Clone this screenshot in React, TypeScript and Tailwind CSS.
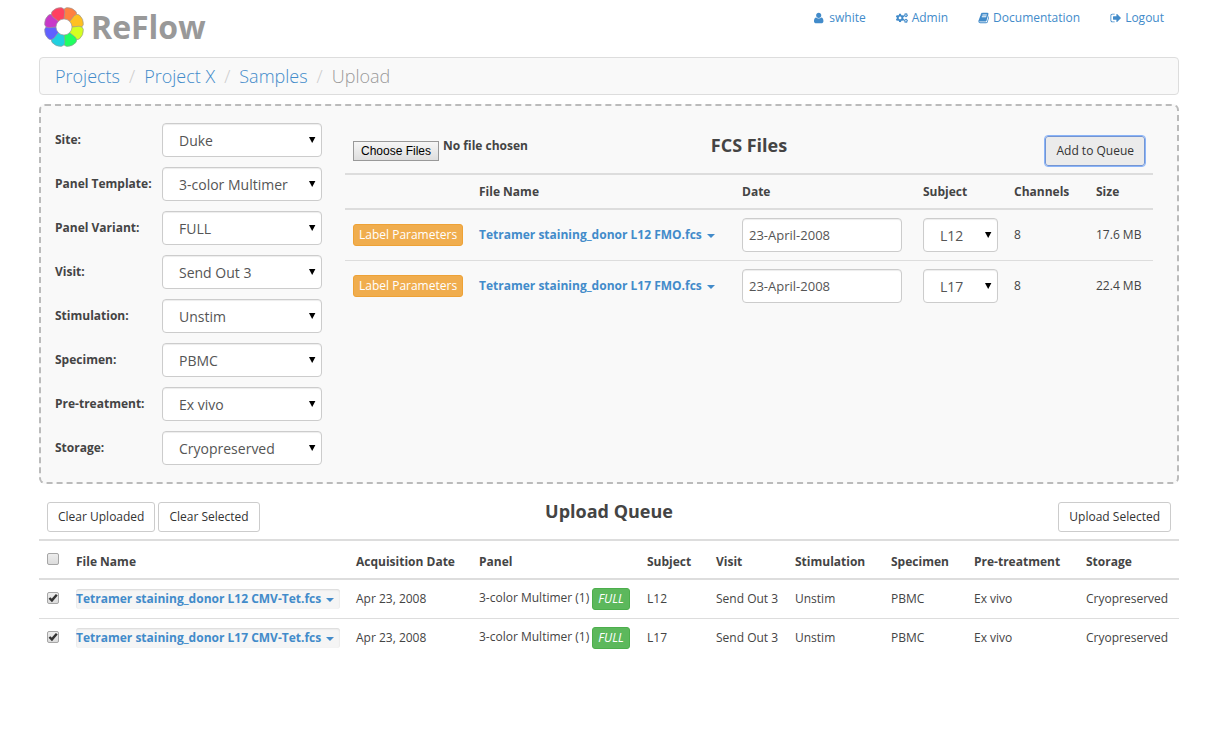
import { useId, type ReactNode } from "react";
import { FaCogs } from "react-icons/fa";

const PETALS = ["#ff8040", "#ffc020", "#d4ff20", "#20ff60", "#20d0e0", "#6060ff", "#c838c8", "#ff4060"];

function Logo() {
  return (
    <svg className="size-[42px]" viewBox="-21 -21 42 42" aria-hidden="true">
      {PETALS.map((color, i) => (
        <path
          key={color}
          transform={`rotate(${22.5 + i * 45})`}
          d="M-3 -7.4 L-6.5 -13.6 Q-7.8 -17 -5.2 -18.8 Q0 -21.4 5.2 -18.8 Q7.8 -17 6.5 -13.6 L3 -7.4 Q0 -8.6 -3 -7.4Z"
          fill={color}
          stroke="#999"
          strokeWidth="0.6"
        />
      ))}
    </svg>
  );
}

function Glyph({ width = 1792, d }: { width?: number; d: string }) {
  return (
    <svg className="h-3 w-auto fill-current" viewBox={`0 0 ${width} 1792`} aria-hidden="true">
      <path d={d} />
    </svg>
  );
}

const USER =
  "M1408 1399q0 109-62.5 187t-150.5 78h-982q-88 0-150.5-78t-62.5-187q0-85 8.5-160.5t31.5-152 58.5-131 94-89 134.5-34.5q131 128 377 128t377-128q76 0 134.5 34.5t94 89 58.5 131 31.5 152 8.5 160.5zm-320-887q0 159-112.5 271.5t-271.5 112.5-271.5-112.5-112.5-271.5 112.5-271.5 271.5-112.5 271.5 112.5 112.5 271.5z";
const BOOK =
  "M1703 478q40 57 18 129l-275 906q-19 64-76.5 107.5t-122.5 43.5h-923q-77 0-148.5-53.5t-99.5-131.5q-24-67-2-127 0-4 3-27t4-37q1-8-3-21.5t-3-19.5q2-11 8-21t16.5-23.5 16.5-23.5q23-38 45-91.5t30-91.5q3-10 .5-30t-.5-28q3-11 17-28t17-23q21-36 42-92t25-90q1-9-2.5-32t.5-28q4-13 22-30.5t22-22.5q19-26 42.5-84.5t27.5-96.5q1-8-3-25.5t-2-26.5q2-8 9-18t18-23 17-21q8-12 16.5-30.5t15-35 16-36 19.5-32 26.5-23.5 36-11.5 47.5 5.5l-1 3q38-9 51-9h761q74 0 114 56t18 130l-274 906q-36 119-71.5 153.5t-128.5 34.5h-869q-27 0-38 15-11 16-1 43 24 70 144 70h923q29 0 56-15.5t35-41.5l300-987q7-22 5-57 38 15 59 43zm-1064 2q-4 13 2 22.5t20 9.5h608q13 0 25.5-9.5t16.5-22.5l21-64q4-13-2-22.5t-20-9.5h-608q-13 0-25.5 9.5t-16.5 22.5zm-83 256q-4 13 2 22.5t20 9.5h608q13 0 25.5-9.5t16.5-22.5l21-64q4-13-2-22.5t-20-9.5h-608q-13 0-25.5 9.5t-16.5 22.5z";
const SIGN_OUT =
  "M704 1440q0 4 1 20t.5 26.5-3 23.5-10 19.5-20.5 6.5h-320q-119 0-203.5-84.5t-84.5-203.5v-704q0-119 84.5-203.5t203.5-84.5h320q13 0 22.5 9.5t9.5 22.5q0 4 1 20t.5 26.5-3 23.5-10 19.5-20.5 6.5h-320q-66 0-113 47t-47 113v704q0 66 47 113t113 47h312l11.5 1 11.5 3 8 5.5 7 9 2 13.5zm928-544q0 26-19 45l-544 544q-19 19-45 19t-45-19-19-45v-288h-448q-26 0-45-19t-19-45v-384q0-26 19-45t45-19h448v-288q0-26 19-45t45-19 45 19l544 544q19 19 19 45z";

const NAV: { label: string; icon: ReactNode }[] = [
  { label: "swhite", icon: <Glyph width={1640} d={USER} /> },
  { label: "Admin", icon: <FaCogs className="h-3 w-3" aria-hidden="true" /> },
  { label: "Documentation", icon: <Glyph width={1640} d={BOOK} /> },
  { label: "Logout", icon: <Glyph width={1640} d={SIGN_OUT} /> },
];

const FILTERS = [
  ["Site:", "Duke"],
  ["Panel Template:", "3-color Multimer"],
  ["Panel Variant:", "FULL"],
  ["Visit:", "Send Out 3"],
  ["Stimulation:", "Unstim"],
  ["Specimen:", "PBMC"],
  ["Pre-treatment:", "Ex vivo"],
  ["Storage:", "Cryopreserved"],
];

const FILES = [
  { name: "Tetramer staining_donor L12 FMO.fcs", date: "23-April-2008", subject: "L12", channels: 8, size: "17.6 MB" },
  { name: "Tetramer staining_donor L17 FMO.fcs", date: "23-April-2008", subject: "L17", channels: 8, size: "22.4 MB" },
];

const QUEUE = [
  { name: "Tetramer staining_donor L12 CMV-Tet.fcs", subject: "L12" },
  { name: "Tetramer staining_donor L17 CMV-Tet.fcs", subject: "L17" },
];

function Select({ id, value, label }: { id?: string; value: string; label?: string }) {
  return (
    <span className="grid w-full items-center">
      <select
        id={id}
        aria-label={label}
        defaultValue={value}
        className="col-start-1 row-start-1 h-[34px] w-full appearance-none rounded border border-[#ccc] bg-white pt-0.5 pl-4 text-sm text-[#555] shadow-[inset_0_1px_1px_rgba(0,0,0,0.075)]"
      >
        <option>{value}</option>
      </select>
      <svg
        className="pointer-events-none col-start-1 row-start-1 mr-1.5 h-1.5 w-[7px] justify-self-end"
        viewBox="0 0 7 6"
        aria-hidden="true"
      >
        <path d="M0 0H6.4L3.2 6Z" fill="#000" />
      </svg>
    </span>
  );
}

function Checkbox({ label, checked = false }: { label: string; checked?: boolean }) {
  return (
    <span className="grid size-3">
      <input
        type="checkbox"
        aria-label={label}
        defaultChecked={checked}
        className="peer col-start-1 row-start-1 size-3 appearance-none rounded-xs border border-[#a6a6a6] bg-linear-to-b from-[#ededed] to-[#dcdcdc]"
      />
      <svg
        className="pointer-events-none invisible col-start-1 row-start-1 size-3 peer-checked:visible"
        viewBox="0 0 12 12"
        aria-hidden="true"
      >
        <path d="M2.4 6L4.9 8.4L9.8 2.8" fill="none" stroke="#333" strokeWidth="2.4" />
      </svg>
    </span>
  );
}

function Caret() {
  return (
    <svg className="ml-[5px] inline-block h-1 w-2 fill-current" viewBox="0 0 8 4" aria-hidden="true">
      <path d="M0 0H8L4 4Z" />
    </svg>
  );
}

function Button({ children, active = false }: { children: ReactNode; active?: boolean }) {
  const state = active
    ? "border-[#7495d3] bg-[#ebebeb] outline-1 outline-[#8ab4f8]"
    : "border-[#ccc] bg-white";
  return (
    <button type="button" className={`h-[30px] rounded-[3px] border px-2.5 text-xs text-[#333] ${state}`}>
      {children}
    </button>
  );
}

function Filter({ label, value }: { label: string; value: string }) {
  const id = useId();
  return (
    <div className="flex items-center">
      <label htmlFor={id} className="w-[107px] shrink-0 pb-0.5 font-bold">
        {label}
      </label>
      <Select id={id} value={value} />
    </div>
  );
}

export default function App() {
  return (
    <div className="mx-auto max-w-[1140px] font-['Open_Sans','Noto_Sans',sans-serif] text-xs leading-[17px] text-[#444]">
      <header className="flex h-[57px] items-start justify-between pr-[15px] pl-1">
        <a href="#home" className="flex items-center gap-1.5 pt-1.5 text-[32px] leading-[42px] font-bold text-[#999]">
          <Logo />
          ReFlow
        </a>
        <nav className="flex gap-[30px] pt-[9px] text-[#428bca]">
          {NAV.map(({ label, icon }) => (
            <a key={label} href={`#${label}`} className="flex items-center gap-1">
              {icon}
              {label}
            </a>
          ))}
        </nav>
      </header>

      <nav
        aria-label="Breadcrumb"
        className="rounded border border-[#ddd] bg-[#f9f9f9] px-[15px] py-1.5 text-lg leading-6 font-light"
      >
        <ol className="flex gap-[9px] text-[#ccc]">
          {["Projects", "Project X", "Samples"].map((name) => (
            <li key={name} className="flex gap-[9px]">
              <a href={`#${name}`} className="text-[#428bca]">
                {name}
              </a>
              <span aria-hidden="true">/</span>
            </li>
          ))}
          <li aria-current="page" className="text-[#999]">
            Upload
          </li>
        </ol>
      </nav>

      <main>
        <section className="mt-[9px] flex rounded-md border-2 border-dashed border-[#bbb] bg-[#f9f9f9] pt-[17px] pr-6 pb-[17px] pl-3.5">
          <form className="flex w-[267px] shrink-0 flex-col gap-2.5">
            {FILTERS.map(([label, value]) => (
              <Filter key={label} label={label} value={value} />
            ))}
          </form>

          <div className="ml-[23px] min-w-0 grow">
            <div className="grid h-[50px] grid-cols-[1fr_auto_1fr] items-start px-2 pt-[13px]">
              <div className="flex items-start gap-1 pt-px font-bold">
                <label className="mt-1 h-5 border border-[#999] bg-linear-to-b from-[#f6f6f6] to-[#dedede] px-[7px] font-['Liberation_Sans',sans-serif] text-xs leading-[18px] font-normal text-black">
                  Choose Files
                  <input type="file" multiple className="sr-only" />
                </label>
                <span>No file chosen</span>
              </div>
              <h2 className="text-lg leading-[18px] font-bold">FCS Files</h2>
              <div className="text-right">
                <Button active>Add to Queue</Button>
              </div>
            </div>
            <table className="w-full table-fixed border-t-2 border-[#ddd] text-left">
              <colgroup>
                <col className="w-[126px]" />
                <col />
                <col className="w-[181px]" />
                <col className="w-[91px]" />
                <col className="w-[82px]" />
                <col className="w-[65px]" />
              </colgroup>
              <thead>
                <tr className="h-[35px] border-b-2 border-[#ddd]">
                  <td />
                  {["File Name", "Date", "Subject", "Channels", "Size"].map((title) => (
                    <th key={title} scope="col" className="px-2 font-bold">
                      {title}
                    </th>
                  ))}
                </tr>
              </thead>
              <tbody>
                {FILES.map((file) => (
                  <tr key={file.name} className="h-[51px] border-[#ddd] not-last:border-b">
                    <td className="pl-2">
                      <button
                        type="button"
                        className="h-[22px] rounded-[3px] border border-[#eea236] bg-[#f0ad4e] px-[5px] whitespace-nowrap text-white"
                      >
                        Label Parameters
                      </button>
                    </td>
                    <td className="px-2 whitespace-nowrap">
                      <button type="button" className="font-bold text-[#428bca]">
                        {file.name}
                        <Caret />
                      </button>
                    </td>
                    <td className="px-2">
                      <input
                        type="text"
                        aria-label={`Date of ${file.name}`}
                        defaultValue={file.date}
                        className="block h-[34px] w-[160px] rounded border border-[#ccc] bg-white px-1.5 text-[13px] text-[#555] shadow-[inset_0_1px_1px_rgba(0,0,0,0.075)]"
                      />
                    </td>
                    <td className="px-2">
                      <Select value={file.subject} label={`Subject of ${file.name}`} />
                    </td>
                    <td className="px-2">{file.channels}</td>
                    <td className="pl-2 whitespace-nowrap">{file.size}</td>
                  </tr>
                ))}
              </tbody>
            </table>
          </div>
        </section>

        <section className="pt-[18px]">
          <div className="grid h-[37px] grid-cols-[1fr_auto_1fr] items-start px-2">
            <div className="flex gap-[3px]">
              <Button>Clear Uploaded</Button>
              <Button>Clear Selected</Button>
            </div>
            <h2 className="text-lg leading-[18px] font-bold">Upload Queue</h2>
            <div className="text-right">
              <Button>Upload Selected</Button>
            </div>
          </div>
          <table className="w-full table-fixed border-t-2 border-[#ddd] text-left">
            <colgroup>
              <col className="w-[29px]" />
              <col />
              <col className="w-[123px]" />
              <col className="w-[168px]" />
              <col className="w-[69px]" />
              <col className="w-[79px]" />
              <col className="w-[96px]" />
              <col className="w-[83px]" />
              <col className="w-[112px]" />
              <col className="w-[101px]" />
            </colgroup>
            <thead>
              <tr className="h-[39px] border-b-2 border-[#ddd]">
                <td className="pb-0.5 pl-2">
                  <Checkbox label="Select all" />
                </td>
                {[
                  "File Name",
                  "Acquisition Date",
                  "Panel",
                  "Subject",
                  "Visit",
                  "Stimulation",
                  "Specimen",
                  "Pre-treatment",
                  "Storage",
                ].map((title) => (
                  <th key={title} scope="col" className="pt-1 pl-2 font-bold whitespace-nowrap">
                    {title}
                  </th>
                ))}
              </tr>
            </thead>
            <tbody>
              {QUEUE.map((item) => (
                <tr key={item.name} className="h-[39px] border-[#ddd] whitespace-nowrap not-last:border-b">
                  <td className="pb-0.5 pl-2">
                    <Checkbox label={`Select ${item.name}`} checked />
                  </td>
                  <td className="pl-2">
                    <button
                      type="button"
                      className="h-5 rounded-[3px] bg-[#f5f5f5] pr-1.5 font-bold text-[#428bca] shadow-[inset_0_1px_2px_rgba(0,0,0,0.12)]"
                    >
                      {item.name}
                      <Caret />
                    </button>
                  </td>
                  <td className="pl-2">Apr 23, 2008</td>
                  <td className="pl-2">
                    <div className="flex items-center gap-[3px]">
                      <span className="pb-0.5">3-color Multimer (1)</span>
                      <em className="rounded-[3px] border border-[#4cae4c] bg-[#5cb85c] px-[5px] py-0.5 leading-4 text-white">
                        FULL
                      </em>
                    </div>
                  </td>
                  <td className="pl-2">{item.subject}</td>
                  <td className="pl-2">Send Out 3</td>
                  <td className="pl-2">Unstim</td>
                  <td className="pl-2">PBMC</td>
                  <td className="pl-2">Ex vivo</td>
                  <td className="pl-2">Cryopreserved</td>
                </tr>
              ))}
            </tbody>
          </table>
        </section>
      </main>
    </div>
  );
}
